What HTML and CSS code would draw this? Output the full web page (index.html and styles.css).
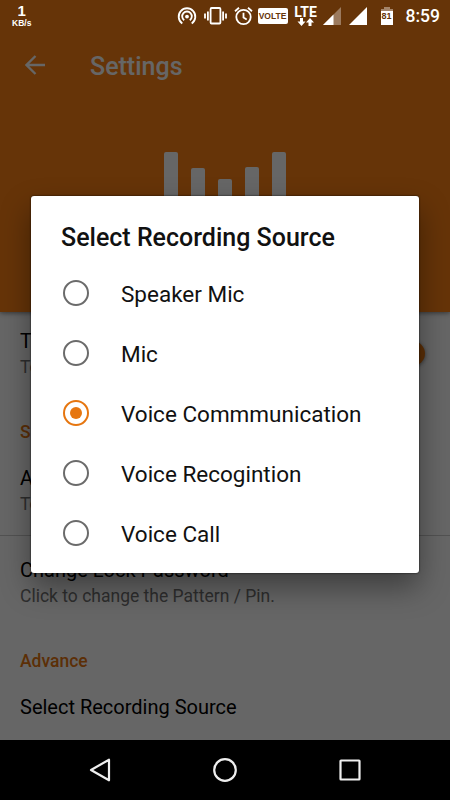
FILE: index.html
```html
<!DOCTYPE html>
<html lang="en">
<head>
<meta charset="UTF-8">
<meta name="viewport" content="width=device-width, initial-scale=1.0">
<title>Settings</title>
<link rel="stylesheet" href="styles.css">
</head>
<body>
<div class="phone">
    <div class="screen">
        <header class="header">
            <div class="toolbar">
                <svg class="back" width="20" height="20" viewBox="0 0 20 20"><path d="M20 10H2M10.5 1L1.5 10l9 9" fill="none" stroke="#fff" stroke-width="2.3"/></svg>
                <h1>Settings</h1>
            </div>
            <div class="bars">
                <span class="bar bar-1"></span>
                <span class="bar bar-2"></span>
                <span class="bar bar-3"></span>
                <span class="bar bar-4"></span>
                <span class="bar bar-5"></span>
            </div>
        </header>
        <main class="settings">
            <div class="item first">
                <div>
                    <p class="name">T</p>
                    <p class="desc">To</p>
                </div>
                <span class="thumb"></span>
            </div>
            <h2>S</h2>
            <div class="item divider">
                <div>
                    <p class="name">A</p>
                    <p class="desc">To</p>
                </div>
            </div>
            <div class="item">
                <div>
                    <p class="name">Change Lock Password</p>
                    <p class="desc">Click to change the Pattern / Pin.</p>
                </div>
            </div>
            <h2>Advance</h2>
            <div class="item">
                <p class="name">Select Recording Source</p>
            </div>
        </main>
    </div>

    <div class="overlay">
        <div class="dialog">
            <h3>Select Recording Source</h3>
            <label class="option"><input type="radio" name="source"><span>Speaker Mic</span></label>
            <label class="option"><input type="radio" name="source"><span>Mic</span></label>
            <label class="option"><input type="radio" name="source" checked><span>Voice Commmunication</span></label>
            <label class="option"><input type="radio" name="source"><span>Voice Recogintion</span></label>
            <label class="option"><input type="radio" name="source"><span>Voice Call</span></label>
        </div>
    </div>

    <div class="status">
        <div class="speed"><b>1</b><small>KB/s</small></div>
        <div class="status-icons">
            <!-- hotspot -->
            <svg width="20" height="20" viewBox="0 0 20 20" fill="none" stroke="#fff" stroke-width="1.8"><path d="M5.3 17.4A8.3 8.3 0 1 1 14.7 17.4M7.2 14.2A4.8 4.8 0 1 1 12.8 14.2"/><circle cx="10" cy="10.6" r="1.9" fill="#fff" stroke="none"/></svg>
            <!-- vibrate -->
            <svg class="vibrate" width="23" height="20" viewBox="0 0 23 20" fill="none" stroke="#fff" stroke-width="1.8"><rect x="6.6" y="2" width="9.8" height="15.5" rx="1"/><path d="M3.9 5.5v9M1 7.5v5M19.1 5.5v9M22 7.5v5"/></svg>
            <!-- alarm -->
            <svg class="alarm" width="19" height="20" viewBox="0 0 19 20" fill="none" stroke="#fff" stroke-width="1.8"><circle cx="9.5" cy="11" r="7.2"/><path d="M9.5 6.7v4.7l3.2 2M1 5.2L5 1.8M18 5.2l-4-3.4"/></svg>
            <span class="volte">VOLTE</span>
            <div class="lte">
                <span>LTE</span>
                <svg width="17" height="8" viewBox="0 0 17 8" fill="#fff"><path d="M3 0h3v3.5h2.5L4.5 8 .5 3.5H3zM11.5 8h3V4.5H17L13 0 9 4.5h2.5z"/></svg>
            </div>
            <svg class="signal" width="18" height="18" viewBox="0 0 18 18"><path d="M18 0v18H0z" fill="#fff" opacity=".35"/><path d="M10.5 7.5V18H0z" fill="#fff"/></svg>
            <svg class="signal-full" width="18" height="18" viewBox="0 0 18 18"><path d="M18 0v18H0z" fill="#fff"/></svg>
            <div class="battery"><span>81</span></div>
            <span class="clock">8:59</span>
        </div>
    </div>

    <nav class="navbar">
        <svg width="24" height="24" viewBox="0 0 24 24"><path d="M21 1.7v20.6L3 12z"/></svg>
        <svg width="24" height="24" viewBox="0 0 24 24"><circle cx="12" cy="12" r="10.8"/></svg>
        <svg width="24" height="24" viewBox="0 0 24 24"><rect x="2.5" y="2.5" width="19" height="19" rx=".5"/></svg>
    </nav>
</div>
</body>
</html>
```
FILE: styles.css
```css
* {
    box-sizing: border-box;
}
body {
    margin: 0;
    font-family: Roboto, sans-serif;
    background: #000;
}
h1, h2, h3, p {
    margin: 0;
    font-weight: 500;
}
.phone {
    position: relative;
    width: 450px;
    height: 800px;
    overflow: hidden;
}
.screen {
    height: 740px;
    background: #fff;
    overflow: hidden;
}
.header {
    position: relative;
    height: 312px;
    padding-top: 32px;
    background: #ff8214;
    box-shadow: 0 1px 5px rgba(0,0,0,0.5);
}
.toolbar {
    display: flex;
    align-items: center;
    height: 66px;
    padding-left: 25px;
    gap: 45px;
}
h1 {
    padding-top: 3px;
    font-size: 25px;
    line-height: 30px;
    color: #fff;
}
.bars {
    display: flex;
    justify-content: center;
    align-items: center;
    gap: 12.8px;
    height: 120px;
    margin-top: 54px;
}
.bar {
    width: 14px;
    border-radius: 2px;
    background: #fff;
}
.bar-1, .bar-5 {
    height: 120px;
}
.bar-2 {
    height: 88px;
}
.bar-3 {
    height: 67px;
}
.bar-4 {
    height: 91px;
}
.item {
    display: flex;
    justify-content: space-between;
    align-items: center;
    padding: 22px 25px 17px 20px;
}
.item.first {
    padding-top: 17px;
}
.divider {
    border-bottom: 1px solid #ccc;
}
.name {
    font-size: 20px;
    line-height: 24px;
    font-weight: 400;
    color: #000;
}
.desc {
    padding-top: 1px;
    font-size: 17.5px;
    line-height: 27px;
    font-weight: 400;
    color: #737373;
}
.thumb {
    width: 25px;
    height: 25px;
    margin-bottom: 4px;
    border-radius: 50%;
    background: #e67610;
    box-shadow: 0 1px 4px rgba(0,0,0,0.5);
}
h2 {
    padding: 22px 20px 0;
    font-size: 17.5px;
    line-height: 24px;
    color: #e67610;
}
.overlay {
    position: absolute;
    inset: 0 0 60px;
    padding: 196px 31px 0;
    background: rgba(0,0,0,0.6);
}
.dialog {
    height: 377px;
    padding-top: 24px;
    background: #fff;
    border-radius: 3px;
    box-shadow: 0 0 2px rgba(0,0,0,0.9), 0 14px 30px rgba(0,0,0,0.4);
}
h3 {
    height: 43px;
    padding-left: 30px;
    font-size: 25px;
    line-height: 36px;
    color: #111;
}
.option {
    display: flex;
    align-items: center;
    height: 60px;
    padding-left: 32px;
    gap: 32px;
    font-size: 22.5px;
    color: #111;
}
.option span {
    padding-top: 1px;
}
.option input {
    appearance: none;
    width: 26px;
    height: 26px;
    margin: 0;
    padding: 5px;
    border: 2.5px solid #6b6b6b;
    border-radius: 50%;
}
.option input:checked {
    border-color: #e67610;
    background: #e67610 content-box;
}
.status {
    position: absolute;
    top: 0;
    left: 0;
    right: 0;
    display: flex;
    justify-content: space-between;
    height: 32px;
    padding: 0 10px 0 12px;
    color: #fff;
}
.speed {
    display: flex;
    flex-direction: column;
    align-items: center;
    padding-top: 2px;
    font-family: "Liberation Sans", Arial, sans-serif;
}
.speed b {
    font-size: 15px;
    line-height: 17px;
}
.speed small {
    font-size: 8.5px;
    line-height: 9px;
    font-weight: bold;
}
.status-icons {
    display: flex;
    align-items: center;
}
.vibrate {
    margin-left: 7px;
}
.alarm {
    margin-left: 7px;
}
.volte {
    width: 30px;
    height: 16px;
    margin-left: 5px;
    border-radius: 2px;
    background: #fff;
    color: #663408;
    font: bold 8.5px/16px "Liberation Sans", Arial, sans-serif;
    text-align: center;
}
.lte {
    display: flex;
    flex-direction: column;
    align-items: center;
    width: 22px;
    margin-left: 7px;
    font-size: 14px;
    line-height: 12px;
    font-weight: 700;
}
.signal {
    margin-left: 6px;
}
.signal-full {
    margin-left: 8px;
}
.battery {
    position: relative;
    width: 12px;
    height: 16px;
    margin: 2px 0 0 14px;
    background: #fff;
    color: #663408;
    text-align: center;
    font: bold 9px/15px "Liberation Sans", Arial, sans-serif;
}
.battery::before {
    content: "";
    position: absolute;
    top: -2px;
    left: 3px;
    width: 6px;
    height: 2px;
    background: #a38469;
}
.battery::after {
    content: "";
    position: absolute;
    top: 0;
    left: 0;
    width: 12px;
    height: 2px;
    background: #a38469;
}
.clock {
    margin-left: 13px;
    font-size: 17.5px;
    font-weight: 500;
}
.navbar {
    display: flex;
    justify-content: space-between;
    align-items: center;
    height: 60px;
    padding: 0 88px;
    background: #000;
}
.navbar svg {
    fill: none;
    stroke: #eee;
    stroke-width: 2.2;
    stroke-linejoin: round;
}
```
